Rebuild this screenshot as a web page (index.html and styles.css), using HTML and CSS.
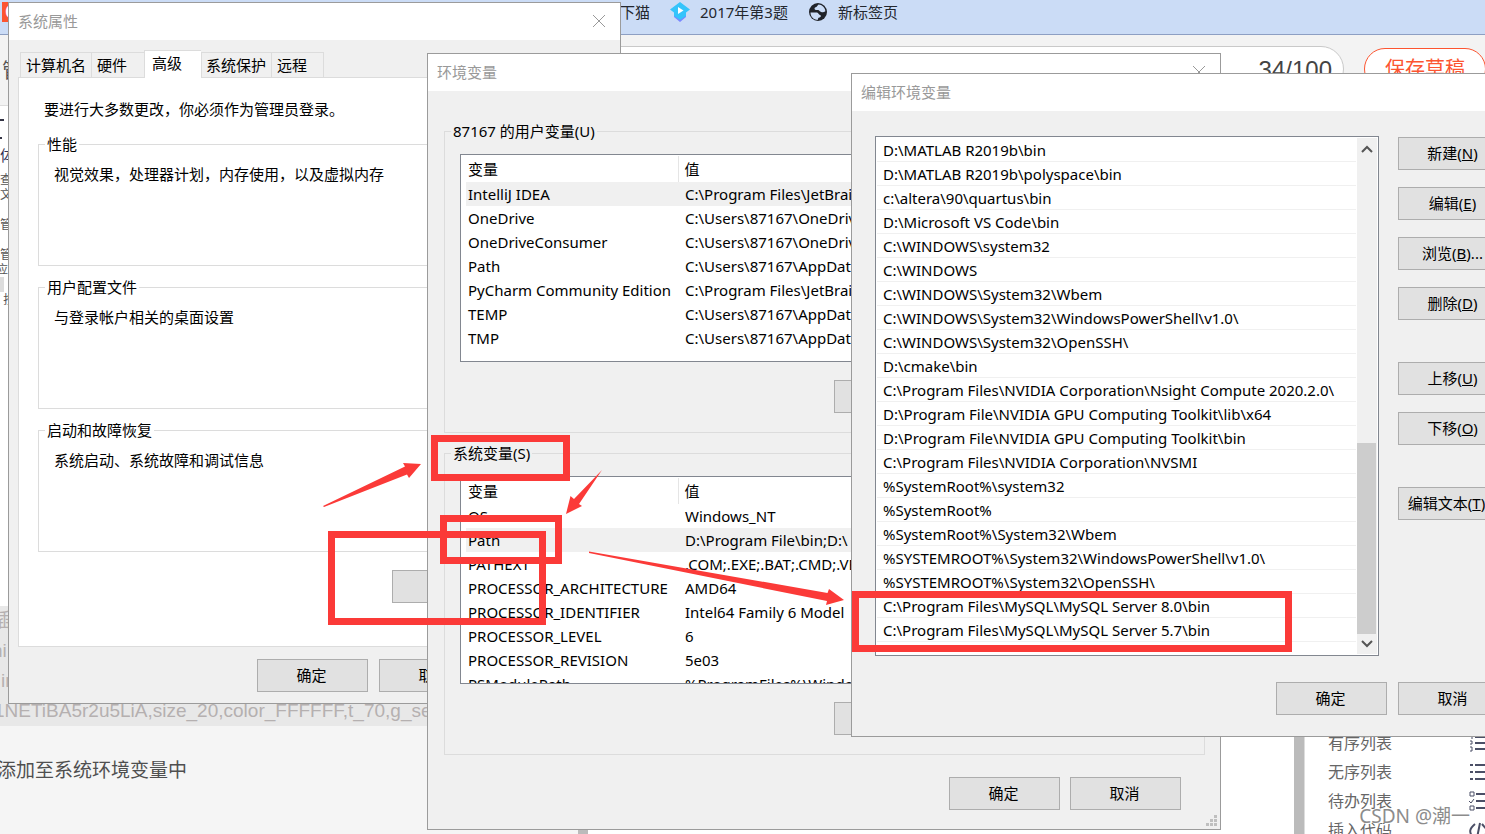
FILE: index.html
```html
<!DOCTYPE html>
<html lang="zh-CN">
<head>
<meta charset="utf-8">
<title>环境变量</title>
<link rel="stylesheet" href="styles.css">
</head>
<body>
<div class="desktop">

  <div class="browser">
    <nav class="bookmarks">
      <span class="site-tile">C</span>
      <a class="bookmark bookmark-first" href="#">下猫</a>
      <a class="bookmark" href="#">
        <svg class="icon" viewBox="0 0 20 20"><path d="M4 12l6 3 6-3v3l-6 5-6-5z" fill="#7a86ff"/><path d="M10 0l10 7.500-4 3v3.500L10 18l-6-4v-3.500l-4-3z" fill="#35c4fb"/><path d="M8 5l5.500 3.500L8 12z" fill="#fff"/></svg>
        2017年第3题</a>
      <a class="bookmark" href="#">
        <svg class="icon" viewBox="0 0 20 20"><circle cx="10" cy="10" r="9" fill="#202329"/><path d="M2.500 10.500h6.500c1.500 0 1.500 2.500 3 2.500 1.500.500 1 2-.500 2.500-1.500.300-1.500 1-1.500 2.300C6 18 2.500 15 2.500 10.500zM10.500 2.600c3.500.200 6.500 3 6.900 6.600-1.400 1-2.600 1.300-4.200.800-1.600-.300-1.700-1.800-3.200-2-1.500.200-3.500.200-3.500-1.500 0-1.500 2-1 2.500-2.300z" fill="#cbdcf6"/></svg>
        新标签页</a>
    </nav>
    <header class="article-bar">
      <span class="manage">管</span>
      <div class="title-pill"><span>34/100</span></div>
      <button class="save" type="button">保存草稿</button>
    </header>
    <main class="workspace">
      <section class="editor">
        <div class="strip">
          <svg class="strip-mark" viewBox="0 0 9 33"><path d="M0 9h4M0 27h2" stroke="#334" stroke-width="2"/></svg>
          <span class="strip-style">体</span>
          <span>查</span><span>文</span><span class="after-gap">管</span><span class="after-gap">管</span><span class="shifted">应用</span>
          <i class="chip"></i><span class="shifted">I 按</span>
        </div>
        <div class="source">
          <p class="cut">插</p><p class="cut">ni</p><p class="whole">in</p>
          <p>1NETiBA5r2u5LiA,size_20,color_FFFFFF,t_70,g_se</p>
        </div>
        <p class="paragraph">添加至系统环境变量中</p>
      </section>
      <i class="scroll-track"></i>
      <section class="preview"></section>
      <i class="scroll-track"></i>
      <aside class="syntax">
        <ul>
          <li>有序列表<svg viewBox="0 0 22 20"><path d="M6 4h16M6 10h16M6 16h16" stroke="#4b4f66" stroke-width="2"/><path d="M1 2h2v4M1 8h2v3H1M1 14h2v4H1" fill="none" stroke="#4b4f66"/></svg></li>
          <li>无序列表<svg viewBox="0 0 22 20"><path d="M6 3h16M6 10h16M6 17h16M1 3h3M1 10h3M1 17h3" stroke="#4b4f66" stroke-width="2"/></svg></li>
          <li>待办列表<svg viewBox="0 0 22 20"><path d="M7 3h15M7 10h15M7 17h15" stroke="#4b4f66" stroke-width="2"/><path d="M1 1h4v4H1zM0 10l2 2 3-4M1 15h4v4H1z" fill="none" stroke="#4b4f66"/></svg></li>
          <li>插入代码<svg viewBox="0 0 22 20"><path d="M6 4C0 9 0 12 4 18M11 3L8 18M13 4l6 7-5 7" fill="none" stroke="#4b4f66" stroke-width="2"/></svg></li>
        </ul>
      </aside>
    </main>
  </div>

  <section class="window properties">
    <header class="titlebar"><h2>系统属性</h2><button class="close" type="button" aria-label="关闭"><svg viewBox="0 0 14 14"><path d="M1 1l12 12M13 1L1 13"/></svg></button></header>
    <div class="window-body">
      <div class="tabs" role="tablist">
        <button class="tab tab-name" role="tab" type="button">计算机名</button>
        <button class="tab tab-hardware" role="tab" type="button">硬件</button>
        <button class="tab tab-active" role="tab" type="button" aria-selected="true">高级</button>
        <button class="tab tab-protect" role="tab" type="button">系统保护</button>
        <button class="tab tab-remote" role="tab" type="button">远程</button>
      </div>
      <div class="tab-panel">
        <p class="notice">要进行大多数更改，你必须作为管理员登录。</p>
        <fieldset class="group"><legend>性能</legend><p>视觉效果，处理器计划，内存使用，以及虚拟内存</p></fieldset>
        <fieldset class="group"><legend>用户配置文件</legend><p>与登录帐户相关的桌面设置</p></fieldset>
        <fieldset class="group"><legend>启动和故障恢复</legend><p>系统启动、系统故障和调试信息</p></fieldset>
        <button class="btn btn-wide" type="button" aria-label="环境变量"></button>
      </div>
      <footer class="actions"><button class="btn" type="button">确定</button><button class="btn" type="button">取消</button><button class="btn" type="button" aria-label="应用"></button></footer>
    </div>
  </section>

  <section class="window variables">
    <header class="titlebar"><h2>环境变量</h2><button class="close" type="button" aria-label="关闭"><svg viewBox="0 0 14 14"><path d="M1 1l12 12M13 1L1 13"/></svg></button></header>
    <div class="window-body">
      <fieldset class="group">
        <legend>87167 的用户变量(U)</legend>
        <div class="listbox">
          <table>
            <thead><tr><th>变量</th><th>值</th></tr></thead>
            <tbody>
              <tr class="selected"><td>IntelliJ IDEA</td><td>C:\Program Files\JetBrains</td></tr>
              <tr><td>OneDrive</td><td>C:\Users\87167\OneDrive</td></tr>
              <tr><td>OneDriveConsumer</td><td>C:\Users\87167\OneDrive</td></tr>
              <tr><td>Path</td><td>C:\Users\87167\AppData</td></tr>
              <tr><td>PyCharm Community Edition</td><td>C:\Program Files\JetBrains</td></tr>
              <tr><td>TEMP</td><td>C:\Users\87167\AppData</td></tr>
              <tr><td>TMP</td><td>C:\Users\87167\AppData</td></tr>
            </tbody>
          </table>
        </div>
        <div class="actions"><button class="btn" type="button" aria-label="新建"></button><button class="btn" type="button" aria-label="编辑"></button><button class="btn" type="button" aria-label="删除"></button></div>
      </fieldset>
      <fieldset class="group">
        <legend>系统变量(S)</legend>
        <div class="listbox">
          <table>
            <thead><tr><th>变量</th><th>值</th></tr></thead>
            <tbody>
              <tr><td>OS</td><td>Windows_NT</td></tr>
              <tr class="selected"><td>Path</td><td>D:\Program File\bin;D:\</td></tr>
              <tr><td>PATHEXT</td><td>.COM;.EXE;.BAT;.CMD;.VBS</td></tr>
              <tr><td>PROCESSOR_ARCHITECTURE</td><td>AMD64</td></tr>
              <tr><td>PROCESSOR_IDENTIFIER</td><td>Intel64 Family 6 Model</td></tr>
              <tr><td>PROCESSOR_LEVEL</td><td>6</td></tr>
              <tr><td>PROCESSOR_REVISION</td><td>5e03</td></tr>
              <tr><td>PSModulePath</td><td>%ProgramFiles%\Windows</td></tr>
            </tbody>
          </table>
        </div>
        <div class="actions"><button class="btn" type="button" aria-label="新建"></button><button class="btn" type="button" aria-label="编辑"></button><button class="btn" type="button" aria-label="删除"></button></div>
      </fieldset>
      <footer class="actions"><button class="btn" type="button">确定</button><button class="btn" type="button">取消</button></footer>
    </div>
    <svg class="grip" viewBox="0 0 11 11"><path d="M8 0h3v3H8zM4 4h3v3H4zM8 4h3v3H8zM0 8h3v3H0zM4 8h3v3H4zM8 8h3v3H8z" fill="#bfbfbf"/></svg>
  </section>

  <section class="window edit">
    <header class="titlebar"><h2>编辑环境变量</h2></header>
    <div class="window-body">
      <div class="edit-main">
        <div class="pathbox">
          <ul class="paths">
            <li>D:\MATLAB R2019b\bin</li>
            <li>D:\MATLAB R2019b\polyspace\bin</li>
            <li>c:\altera\90\quartus\bin</li>
            <li>D:\Microsoft VS Code\bin</li>
            <li>C:\WINDOWS\system32</li>
            <li>C:\WINDOWS</li>
            <li>C:\WINDOWS\System32\Wbem</li>
            <li>C:\WINDOWS\System32\WindowsPowerShell\v1.0\</li>
            <li>C:\WINDOWS\System32\OpenSSH\</li>
            <li>D:\cmake\bin</li>
            <li>C:\Program Files\NVIDIA Corporation\Nsight Compute 2020.2.0\</li>
            <li>D:\Program File\NVIDIA GPU Computing Toolkit\lib\x64</li>
            <li>D:\Program File\NVIDIA GPU Computing Toolkit\bin</li>
            <li>C:\Program Files\NVIDIA Corporation\NVSMI</li>
            <li>%SystemRoot%\system32</li>
            <li>%SystemRoot%</li>
            <li>%SystemRoot%\System32\Wbem</li>
            <li>%SYSTEMROOT%\System32\WindowsPowerShell\v1.0\</li>
            <li>%SYSTEMROOT%\System32\OpenSSH\</li>
            <li>C:\Program Files\MySQL\MySQL Server 8.0\bin</li>
            <li>C:\Program Files\MySQL\MySQL Server 5.7\bin</li>
          </ul>
          <div class="scrollbar">
            <svg viewBox="0 0 20 24"><path d="M5 14l5-5 5 5"/></svg>
            <i class="thumb"></i>
            <svg class="down" viewBox="0 0 20 20"><path d="M5 7l5 5 5-5"/></svg>
          </div>
        </div>
        <div class="side-buttons">
          <button class="btn" type="button">新建(<u>N</u>)</button>
          <button class="btn" type="button">编辑(<u>E</u>)</button>
          <button class="btn" type="button">浏览(<u>B</u>)...</button>
          <button class="btn" type="button">删除(<u>D</u>)</button>
          <button class="btn btn-section" type="button">上移(<u>U</u>)</button>
          <button class="btn" type="button">下移(<u>O</u>)</button>
          <button class="btn btn-section" type="button">编辑文本(<u>T</u>)...</button>
        </div>
      </div>
      <footer class="actions"><button class="btn" type="button">确定</button><button class="btn" type="button">取消</button></footer>
    </div>
  </section>

  <svg class="marks" width="1485" height="834" viewBox="0 0 1485 834">
    <g fill="none" stroke="#fb3a38" stroke-width="7">
      <rect x="434.500" y="438.500" width="132" height="39"/>
      <rect x="443.500" y="518.500" width="115" height="42"/>
      <rect x="331.500" y="534.500" width="211" height="87"/>
      <rect x="855.500" y="594.500" width="433" height="54"/>
    </g>
    <g fill="#fb3a38">
      <path d="M323 506L405 466.500L403 463L421 464L409 478L407 474.500L324 507z"/>
      <path d="M602 470L579 504L582 506L566 514L570.500 496L574 499z"/>
      <path d="M589 551.500L827.500 593L829 589L844 600L826 605L827 601L589 553z"/>
    </g>
  </svg>
  <span class="watermark">CSDN @潮一</span>
</div>
</body>
</html>
```
FILE: styles.css
```css
* { box-sizing: border-box; }

body {
  margin: 0;
  font: 15px/20px "Noto Sans", "Noto Sans CJK SC", sans-serif;
  color: #000;
}

p, h2, ul { margin: 0; padding: 0; list-style: none; }
button { font: inherit; color: inherit; padding: 0; }

.desktop {
  position: relative;
  height: 100vh;
  overflow: hidden;
}

/* Browser behind the dialogs */
.browser { display: flex; flex-direction: column; height: 100%; background: #fff; }

.bookmarks {
  display: flex;
  align-items: center;
  gap: 20px;
  height: 35px;
  padding-bottom: 10px;
  background: #cbdcf6;
  border-bottom: 1px solid #8d9fc3;
}
.site-tile {
  width: 20px;
  height: 20px;
  margin-left: 2px;
  padding-left: 3px;
  background: #fc5531;
  color: #fff;
  font-size: 17px;
  font-weight: bold;
}
.bookmark {
  display: flex;
  align-items: center;
  gap: 10px;
  color: #23272e;
  text-decoration: none;
}
.bookmark-first { margin-left: 578px; }
.icon { width: 20px; height: 20px; }

.article-bar {
  display: flex;
  align-items: flex-start;
  gap: 20px;
  height: 71px;
  padding-top: 11px;
  background: #f3f3f3;
  border-bottom: 1px solid #ddd;
}
.manage { padding: 15px 0 0 2px; font-size: 20px; color: #555; }
.title-pill {
  flex: 1;
  height: 46px;
  padding-right: 11px;
  border: 1px solid #c9c9c9;
  border-radius: 23px;
  background: #fff;
  color: #444;
  font: 24px/46px "Liberation Sans", sans-serif;
  text-align: right;
}
.save {
  width: 122px;
  height: 42px;
  margin: 2px -1px 0 0;
  border: 1px solid #fc5531;
  border-radius: 21px;
  background: #fff;
  color: #fc5531;
  font-size: 20px;
}

.workspace { display: flex; flex: 1; min-height: 0; }
.editor {
  display: flex;
  flex-direction: column;
  width: 578px;
  background: #f5f5f5;
  overflow: hidden;
  white-space: nowrap;
}
.strip {
  display: flex;
  flex-direction: column;
  height: 500px;
  background: #fff;
  color: #555;
  font-size: 12px;
  line-height: 15px;
}
.strip-mark { width: 9px; height: 33px; margin-top: 5px; }
.strip-style { padding: 2px 0 8px; font-size: 15px; line-height: 18px; color: #335; }
.after-gap { margin-top: 15px; }
.shifted { text-indent: -4px; }
.chip { width: 4px; height: 15px; background: #ddd; }
.source {
  background: #e8e8e8;
  color: #b5b0b0;
  font: 19px/30px "Liberation Sans", "Noto Sans CJK SC", sans-serif;
  text-indent: -6px;
}
.cut { text-indent: -8px; }
.whole { text-indent: 1px; }
.paragraph { padding-top: 29px; color: #4f4f4f; font-size: 19px; line-height: 30px; text-indent: -3px; }
.scroll-track { width: 10px; background: #bbb; }
.preview { flex: 1; }
.syntax {
  display: flex;
  align-items: flex-end;
  width: 181px;
  border-left: 1px solid #ddd;
  color: #666;
  font-size: 16px;
  overflow: hidden;
}
.syntax ul { flex: 1; margin-bottom: -10px; padding-left: 23px; }
.syntax li { display: flex; justify-content: space-between; align-items: center; height: 29px; }
.syntax svg { width: 22px; height: 20px; margin-right: -6px; }

/* Dialogs */
.window { position: absolute; background: #f0f0f0; border: 1px solid #9b9b9b; }
.properties { left: 8px; top: 2px; width: 613px; }
.variables { left: 427px; top: 53px; width: 794px; }
.edit { left: 851px; top: 73px; width: 681px; }

.titlebar {
  display: flex;
  align-items: center;
  justify-content: space-between;
  height: 37px;
  padding: 0 14px 2px 9px;
  background: #fff;
  color: #999;
}
.titlebar h2 { font-size: 15px; font-weight: normal; }
.close { width: 14px; height: 14px; border: 0; background: none; }
.close svg { display: block; width: 14px; height: 14px; fill: none; stroke: #999; }

.btn {
  width: 111px;
  height: 33px;
  padding: 0 2px 2px 0;
  border: 1px solid #adadad;
  background: #e1e1e1;
  white-space: nowrap;
}
.actions { display: flex; justify-content: flex-end; gap: 11px; }

.group { min-width: 0; margin: 0; padding: 10px 15px 0; border: 1px solid #dcdcdc; }
.group legend { margin-left: -9px; padding: 0 2px; }

/* System properties */
.properties .window-body { padding: 10px 8px 11px 9px; }
.tabs { display: flex; align-items: flex-end; padding-left: 2px; }
.tab {
  height: 25px;
  padding-left: 5px;
  border: 1px solid #dcdcdc;
  border-width: 1px 0 0 1px;
  background: #f0f0f0;
  text-align: left;
}
.tab-name { width: 71px; }
.tab-hardware { width: 53px; }
.tab-active { width: 57px; height: 28px; margin-bottom: -1px; padding: 0 0 4px 7px; background: #fff; z-index: 1; }
.tab-protect { width: 70px; padding-left: 4px; }
.tab-remote { width: 53px; border-right-width: 1px; }
.tab-panel {
  display: flex;
  flex-direction: column;
  gap: 11px;
  padding: 21px 20px 43px 19px;
  border: 1px solid #dcdcdc;
  background: #fff;
}
.notice { padding: 0 6px 4px; }
.tab-panel .group { height: 132px; }
.btn-wide { align-self: flex-end; width: 199px; margin-top: 7px; }
.properties .actions { padding-top: 12px; }

/* Environment variables */
.variables .window-body {
  display: flex;
  flex-direction: column;
  gap: 10px;
  padding: 30px 15px 19px 16px;
}
.variables .group { padding: 13px 15px 19px; }
.variables footer { gap: 10px; padding: 12px 24px 0 0; }
.listbox { height: 208px; margin-bottom: 18px; padding: 1px 5px 0; border: 1px solid #828790; background: #fff; overflow: hidden; }
.listbox table { width: 100%; table-layout: fixed; border-collapse: collapse; }
.listbox th, .listbox td { height: 24px; padding: 0 0 0 2px; font-weight: normal; text-align: left; white-space: nowrap; }
.listbox th { height: 26px; }
.listbox th:first-child { width: 212px; border-right: 1px solid #e5e5e5; }
.listbox td + td { padding-left: 7px; }
.listbox th + th { padding-left: 6px; }
.selected { background: #f0f0f0; }
.grip { position: absolute; right: 3px; bottom: 3px; width: 11px; height: 11px; }

/* Edit environment variable */
.edit .window-body { padding: 25px 22px 21px 23px; }
.edit-main { display: flex; gap: 19px; margin-bottom: 26px; }
.pathbox { display: flex; flex: 1; height: 520px; padding: 1px; border: 1px solid #828790; background: #fff; }
.paths { flex: 1; min-width: 0; }
.paths li { height: 24px; padding-left: 6px; border-bottom: 1px solid #f0f0f0; line-height: 24px; white-space: nowrap; }
.scrollbar { display: flex; flex-direction: column; width: 20px; margin-left: 1px; background: #f0f0f0; }
.scrollbar svg { width: 20px; height: 24px; fill: none; stroke: #555; stroke-width: 2; }
.scrollbar .down { height: 20px; }
.thumb { height: 191px; margin: auto 1px 0 0; background: #cdcdcd; }
.side-buttons { display: flex; flex-direction: column; gap: 17px; padding-top: 1px; }
.btn-section { margin-top: 25px; }

/* Annotations */
.marks { position: absolute; left: 0; top: 0; }
.watermark {
  position: absolute;
  right: 15px;
  bottom: 6px;
  font-size: 19px;
  line-height: 24px;
  color: #8c8c8c;
  text-shadow: 1px 1px 0 #fff;
}
```
